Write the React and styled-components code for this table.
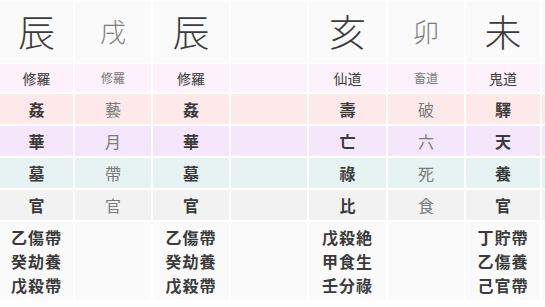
import React from "react";
import styled, { createGlobalStyle } from "styled-components";

const Global = createGlobalStyle`
  html, body { margin: 0; padding: 0; background: #ffffff; overflow: hidden; }
  body { font-family: "Noto Sans CJK JP", "Noto Sans CJK SC", sans-serif; }
`;

const ROW_BG = {
  head: "#fafafa",
  sub: "#fdf1fb",
  r1: "#fde8ea",
  r2: "#f5e6fc",
  r3: "#e6f3f2",
  r4: "#f2f2f2",
  foot: "#fafafa",
};

const Page = styled.div`
  width: 545px;
  height: 307px;
  overflow: hidden;
`;

const Grid = styled.div`
  display: grid;
  grid-template-columns: 73px 76px 76px 76px 77px 76px 74px 76px;
  grid-template-rows: 60px 28px 30px 30px 30px 30px 78px;
  gap: 2px;
  padding-top: 2px;
  width: max-content;
`;

const Cell = styled.div`
  background: ${(p) => ROW_BG[p.$row]};
  display: flex;
  align-items: center;
  justify-content: center;
  color: ${(p) => (p.$dim ? "#7a7a7a" : "#3a3a3a")};
  line-height: 1;
`;

const Branch = styled(Cell)`
  font-weight: 300;
  font-size: ${(p) => (p.$dim ? "26px" : "37px")};
  padding-bottom: 2px;
`;

const Realm = styled(Cell)`
  font-size: ${(p) => (p.$dim ? "12px" : "14px")};
`;

const Star = styled(Cell)`
  font-size: 16px;
  font-weight: ${(p) => (p.$dim ? 400 : 700)};
`;

const Stems = styled(Cell)`
  flex-direction: column;
  justify-content: flex-start;
  padding-top: 3px;
  font-size: 16px;
  font-weight: 700;
  line-height: 24px;
  letter-spacing: 1px;
`;

const cols = [
  { kind: "main", head: "辰", realm: "修羅", stars: ["姦", "華", "墓", "官"], stems: ["乙傷帶", "癸劫養", "戊殺帶"] },
  { kind: "dim", head: "戌", realm: "修羅", stars: ["藝", "月", "帶", "官"], stems: [] },
  { kind: "main", head: "辰", realm: "修羅", stars: ["姦", "華", "墓", "官"], stems: ["乙傷帶", "癸劫養", "戊殺帶"] },
  { kind: "empty", head: "", realm: "", stars: ["", "", "", ""], stems: [] },
  { kind: "main", head: "亥", realm: "仙道", stars: ["壽", "亡", "祿", "比"], stems: ["戊殺絶", "甲食生", "壬分祿"] },
  { kind: "dim", head: "卯", realm: "畜道", stars: ["破", "六", "死", "食"], stems: [] },
  { kind: "main", head: "未", realm: "鬼道", stars: ["驛", "天", "養", "官"], stems: ["丁貯帶", "乙傷養", "己官帶"] },
  { kind: "empty", head: "", realm: "", stars: ["", "", "", ""], stems: [] },
];

const starRows = ["r1", "r2", "r3", "r4"];

export default function App() {
  return (
    <Page>
      <Global />
      <Grid>
        {cols.map((c, i) => (
          <Branch key={`h${i}`} $row="head" $dim={c.kind === "dim"}>
            {c.head}
          </Branch>
        ))}
        {cols.map((c, i) => (
          <Realm key={`s${i}`} $row="sub" $dim={c.kind === "dim"}>
            {c.realm}
          </Realm>
        ))}
        {starRows.map((row, j) =>
          cols.map((c, i) => (
            <Star key={`r${j}-${i}`} $row={row} $dim={c.kind === "dim"}>
              {c.stars[j]}
            </Star>
          ))
        )}
        {cols.map((c, i) => (
          <Stems key={`f${i}`} $row="foot">
            {c.stems.map((t) => (
              <div key={t}>{t}</div>
            ))}
          </Stems>
        ))}
      </Grid>
    </Page>
  );
}
